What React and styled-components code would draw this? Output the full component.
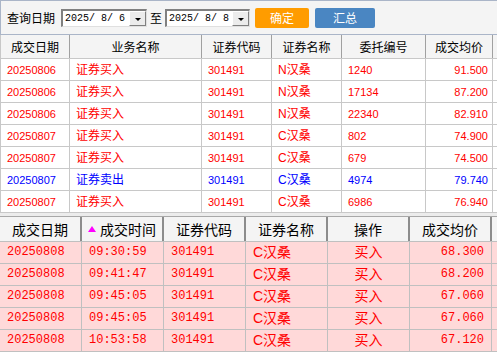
import React from "react";
import styled, { createGlobalStyle } from "styled-components";

const orders = [
  { date: "20250806", biz: "证券买入", code: "301491", name: "N汉桑", no: "1240", price: "91.500", sell: false },
  { date: "20250806", biz: "证券买入", code: "301491", name: "N汉桑", no: "17134", price: "87.200", sell: false },
  { date: "20250806", biz: "证券买入", code: "301491", name: "N汉桑", no: "22340", price: "82.910", sell: false },
  { date: "20250807", biz: "证券买入", code: "301491", name: "C汉桑", no: "802", price: "74.900", sell: false },
  { date: "20250807", biz: "证券买入", code: "301491", name: "C汉桑", no: "679", price: "74.500", sell: false },
  { date: "20250807", biz: "证券卖出", code: "301491", name: "C汉桑", no: "4974", price: "79.740", sell: true },
  { date: "20250807", biz: "证券买入", code: "301491", name: "C汉桑", no: "6986", price: "76.940", sell: false },
];

const fills = [
  { date: "20250808", time: "09:30:59", code: "301491", name: "C汉桑", op: "买入", price: "68.300" },
  { date: "20250808", time: "09:41:47", code: "301491", name: "C汉桑", op: "买入", price: "68.200" },
  { date: "20250808", time: "09:45:05", code: "301491", name: "C汉桑", op: "买入", price: "67.060" },
  { date: "20250808", time: "09:45:05", code: "301491", name: "C汉桑", op: "买入", price: "67.060" },
  { date: "20250808", time: "10:53:58", code: "301491", name: "C汉桑", op: "买入", price: "67.120" },
];

const topCols = [70, 132, 70, 70, 84, 67, 40];
const botCols = [82, 82, 82, 82, 82, 82, 40];

const App = () => {
  return (
    <>
      <GlobalStyle />
      <Page>
        <Toolbar>
          <Label $gap={6}>查询日期</Label>
          <DateBox $w={86}>
            <DateText>2025/ 8/ 6</DateText>
            <DropButton><Arrow /></DropButton>
          </DateBox>
          <Label $gap={3} $lead={3}>至</Label>
          <DateBox $w={85}>
            <DateText>2025/ 8/ 8</DateText>
            <DropButton><Arrow /></DropButton>
          </DateBox>
          <ActionButton $bg="#ff9c00" $w={54}>确定</ActionButton>
          <ActionButton $bg="#4a86c2" $w={60}>汇总</ActionButton>
        </Toolbar>

        <TopHead>
          {["成交日期", "业务名称", "证券代码", "证券名称", "委托编号", "成交均价", ""].map((t, i) => (
            <TopHeadCell key={i} $w={topCols[i]}>{t}</TopHeadCell>
          ))}
        </TopHead>
        {orders.map((o, i) => (
          <TopRow key={i} $color={o.sell ? "#0000ff" : "#ff0000"}>
            <NumCell $w={topCols[0]}>{o.date}</NumCell>
            <TextCell $w={topCols[1]}>{o.biz}</TextCell>
            <NumCell $w={topCols[2]}>{o.code}</NumCell>
            <TextCell $w={topCols[3]}>{o.name}</TextCell>
            <NumCell $w={topCols[4]}>{o.no}</NumCell>
            <NumCell $w={topCols[5]} $right>{o.price}</NumCell>
            <NumCell $w={topCols[6]} />
          </TopRow>
        ))}

        <Divider />

        <BotHead>
          <BotHeadCell $w={botCols[0]}>成交日期</BotHeadCell>
          <BotHeadCell $w={botCols[1]}><SortMark />成交时间</BotHeadCell>
          <BotHeadCell $w={botCols[2]}>证券代码</BotHeadCell>
          <BotHeadCell $w={botCols[3]}>证券名称</BotHeadCell>
          <BotHeadCell $w={botCols[4]}>操作</BotHeadCell>
          <BotHeadCell $w={botCols[5]}>成交均价</BotHeadCell>
          <BotHeadCell $w={botCols[6]} />
        </BotHead>
        {fills.map((f, i) => (
          <BotRow key={i}>
            <MonoCell $w={botCols[0]}>{f.date}</MonoCell>
            <MonoCell $w={botCols[1]}>{f.time}</MonoCell>
            <MonoCell $w={botCols[2]}>{f.code}</MonoCell>
            <WideCell $w={botCols[3]}>{f.name}</WideCell>
            <WideCell $w={botCols[4]} $center>{f.op}</WideCell>
            <MonoCell $w={botCols[5]} $right>{f.price}</MonoCell>
            <MonoCell $w={botCols[6]} />
          </BotRow>
        ))}
      </Page>
    </>
  );
};

export default App;

const GlobalStyle = createGlobalStyle`
  html, body {
    margin: 0;
    padding: 0;
    background: #ffffff;
    overflow: hidden;
  }
  body {
    font-family: "Noto Sans CJK SC", "Liberation Sans", sans-serif;
  }
`;

const Page = styled.div`
  width: 497px;
  height: 354px;
  overflow: hidden;
  display: flex;
  flex-direction: column;
`;

const Toolbar = styled.div`
  box-sizing: border-box;
  height: 35px;
  flex-shrink: 0;
  display: flex;
  align-items: center;
  padding-left: 6px;
  background: #f4f4f4;
  border-top: 1px solid #aab5c8;
  border-bottom: 1px solid #aab5c8;
  border-left: 1px solid #aab5c8;
`;

const Label = styled.span`
  font-size: 12px;
  color: #000;
  line-height: 14px;
  margin-left: ${p => p.$lead || 0}px;
  margin-right: ${p => p.$gap}px;
`;

const DateBox = styled.div`
  box-sizing: border-box;
  width: ${p => p.$w}px;
  height: 18px;
  display: flex;
  align-items: center;
  justify-content: space-between;
  background: #fff;
  border-top: 2px solid #808080;
  border-left: 2px solid #808080;
  border-right: 1px solid #e0e0e0;
  border-bottom: 1px solid #e0e0e0;
  padding-left: 2px;
`;

const DateText = styled.span`
  font-family: "Liberation Mono", monospace;
  font-size: 10px;
  white-space: pre;
  color: #000;
`;

const DropButton = styled.div`
  box-sizing: border-box;
  width: 17px;
  height: 15px;
  display: flex;
  align-items: center;
  justify-content: center;
  background: #ececec;
  border: 1px solid #fff;
  border-right-color: #808080;
  border-bottom-color: #808080;
`;

const Arrow = styled.span`
  width: 0;
  height: 0;
  border-left: 3px solid transparent;
  border-right: 3px solid transparent;
  border-top: 3px solid #000;
  margin-top: 2px;
`;

const ActionButton = styled.button`
  box-sizing: border-box;
  height: 20px;
  width: ${p => p.$w}px;
  margin-left: 5px;
  border: none;
  border-radius: 2px;
  background: ${p => p.$bg};
  color: #fff;
  font-family: "Noto Sans CJK SC", sans-serif;
  font-size: 12px;
  padding: 0;
  line-height: 20px;
  & + & { margin-left: 6px; }
`;

const TopHead = styled.div`
  display: flex;
  height: 24px;
  flex-shrink: 0;
  box-sizing: border-box;
  background: #f4f4f4;
  border-bottom: 1px solid #c8c8c8;
`;

const TopHeadCell = styled.div`
  box-sizing: border-box;
  flex: 0 0 ${p => p.$w}px;
  border-right: 1px solid #a0a0a0;
  font-size: 12px;
  color: #000;
  text-align: center;
  line-height: 23px;
  &:first-child { border-left: 1px solid #c8c8c8; }
`;

const TopRow = styled.div`
  display: flex;
  height: 22px;
  flex-shrink: 0;
  box-sizing: border-box;
  border-bottom: 1px solid #c8c8c8;
  color: ${p => p.$color};
  & > div:first-child { border-left: 1px solid #c8c8c8; }
`;

const NumCell = styled.div`
  box-sizing: border-box;
  flex: 0 0 ${p => p.$w}px;
  border-right: 1px solid #c8c8c8;
  padding: 0 ${p => (p.$right ? 4 : 0)}px 0 ${p => (p.$right ? 0 : 6)}px;
  text-align: ${p => (p.$right ? "right" : "left")};
  font-family: "Liberation Sans", sans-serif;
  font-size: 11px;
  line-height: 22px;
  white-space: nowrap;
`;

const TextCell = styled.div`
  box-sizing: border-box;
  flex: 0 0 ${p => p.$w}px;
  border-right: 1px solid #c8c8c8;
  padding-left: 6px;
  font-family: "Liberation Sans", "Noto Sans CJK SC", sans-serif;
  font-size: 12px;
  line-height: 22px;
  white-space: nowrap;
`;

const Divider = styled.div`
  height: 3px;
  flex-shrink: 0;
  background: #ececec;
`;

const BotHead = styled.div`
  display: flex;
  height: 26px;
  flex-shrink: 0;
  box-sizing: border-box;
  background: #f4f4f4;
  border-top: 1px solid #a8a8a8;
  border-bottom: 1px solid #c0c0c0;
`;

const BotHeadCell = styled.div`
  box-sizing: border-box;
  flex: 0 0 ${p => p.$w}px;
  display: flex;
  align-items: center;
  justify-content: center;
  gap: 4px;
  border-right: 2px solid #8c8c8c;
  font-size: 14px;
  color: #000;
`;

const SortMark = styled.span`
  width: 0;
  height: 0;
  border-left: 4px solid transparent;
  border-right: 4px solid transparent;
  border-bottom: 6px solid #ff00ff;
`;

const BotRow = styled.div`
  display: flex;
  height: 22px;
  flex-shrink: 0;
  box-sizing: border-box;
  background: #ffd9d9;
  border-bottom: 1px solid #c0c0c0;
  color: #ff0000;
`;

const MonoCell = styled.div`
  box-sizing: border-box;
  flex: 0 0 ${p => p.$w}px;
  border-right: 1px solid #c0c0c0;
  padding: 0 ${p => (p.$right ? 7 : 0)}px 0 ${p => (p.$right ? 0 : 7)}px;
  text-align: ${p => (p.$right ? "right" : "left")};
  font-family: "Liberation Mono", monospace;
  font-size: 12px;
  line-height: 21px;
  white-space: nowrap;
`;

const WideCell = styled.div`
  box-sizing: border-box;
  flex: 0 0 ${p => p.$w}px;
  border-right: 1px solid #c0c0c0;
  padding-left: ${p => (p.$center ? 0 : 7)}px;
  text-align: ${p => (p.$center ? "center" : "left")};
  font-family: "Liberation Sans", "Noto Sans CJK SC", sans-serif;
  font-size: 14px;
  line-height: 21px;
  white-space: nowrap;
`;
